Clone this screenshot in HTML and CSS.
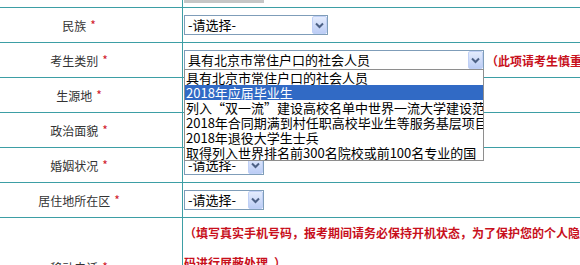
FILE: index.html
```html
<!DOCTYPE html>
<html>
<head>
<meta charset="utf-8">
<link rel="stylesheet" href="styles.css">
</head>
<body>
<div class="form">
  <div class="row row-top">
    <div class="lab"></div>
    <div class="val"><div class="prev-input"></div></div>
  </div>
  <div class="row">
    <div class="lab">民族 <span class="req">*</span></div>
    <div class="val">
      <div class="sel w144"><span class="txt">-请选择-</span><span class="btn"><svg width="15" height="18" viewBox="0 0 15 18"><path d="M4 7.5 L7.5 11 L11 7.5" fill="none" stroke="#4d6185" stroke-width="2"/></svg></span></div>
    </div>
  </div>
  <div class="row">
    <div class="lab">考生类别 <span class="req">*</span></div>
    <div class="val">
      <div class="sel w300"><span class="txt">具有北京市常住户口的社会人员</span><span class="btn"><svg width="15" height="18" viewBox="0 0 15 18"><path d="M4 7.5 L7.5 11 L11 7.5" fill="none" stroke="#4d6185" stroke-width="2"/></svg></span>
        <div class="list">
          <div class="opt">具有北京市常住户口的社会人员</div>
          <div class="opt on">2018年应届毕业生</div>
          <div class="opt">列入“双一流”建设高校名单中世界一流大学建设范围的</div>
          <div class="opt">2018年合同期满到村任职高校毕业生等服务基层项目人员</div>
          <div class="opt">2018年退役大学生士兵</div>
          <div class="opt">取得列入世界排名前300名院校或前100名专业的国</div>
        </div>
      </div>
      <span class="hint">（此项请考生慎重选择，一经确认不得修改）</span>
    </div>
  </div>
  <div class="row">
    <div class="lab">生源地 <span class="req">*</span></div>
    <div class="val">
      <div class="sel w144"><span class="txt">-请选择-</span><span class="btn"><svg width="15" height="18" viewBox="0 0 15 18"><path d="M4 7.5 L7.5 11 L11 7.5" fill="none" stroke="#4d6185" stroke-width="2"/></svg></span></div>
    </div>
  </div>
  <div class="row">
    <div class="lab">政治面貌 <span class="req">*</span></div>
    <div class="val">
      <div class="sel w144"><span class="txt">-请选择-</span><span class="btn"><svg width="15" height="18" viewBox="0 0 15 18"><path d="M4 7.5 L7.5 11 L11 7.5" fill="none" stroke="#4d6185" stroke-width="2"/></svg></span></div>
    </div>
  </div>
  <div class="row">
    <div class="lab">婚姻状况 <span class="req">*</span></div>
    <div class="val">
      <div class="sel w80"><span class="txt">-请选择-</span><span class="btn"><svg width="15" height="18" viewBox="0 0 15 18"><path d="M4 7.5 L7.5 11 L11 7.5" fill="none" stroke="#4d6185" stroke-width="2"/></svg></span></div>
    </div>
  </div>
  <div class="row">
    <div class="lab">居住地所在区 <span class="req">*</span></div>
    <div class="val">
      <div class="sel w80"><span class="txt">-请选择-</span><span class="btn"><svg width="15" height="18" viewBox="0 0 15 18"><path d="M4 7.5 L7.5 11 L11 7.5" fill="none" stroke="#4d6185" stroke-width="2"/></svg></span></div>
    </div>
  </div>
  <div class="row row-tall">
    <div class="lab">移动电话 <span class="req">*</span></div>
    <div class="val val-top">
      <div class="note">（填写真实手机号码，报考期间请务必保持开机状态，为了保护您的个人隐私，系统将对您的手机号<br>码进行屏蔽处理。）</div>
    </div>
  </div>
</div>
</body>
</html>
```

FILE: styles.css
```css
html, body {
  margin: 0;
  padding: 0;
  background: #fff;
  overflow: hidden;
}
body {
  width: 580px;
  height: 265px;
  font-family: "Noto Sans CJK SC", "Liberation Sans", sans-serif;
  color: #333;
}
.form {
  width: 580px;
}
.row {
  display: flex;
  height: 34px;
  border-bottom: 1px solid #3d9ea5;
}
.row-top {
  height: 7px;
}
.row-tall {
  height: 98px;
  border-bottom: none;
}
.lab {
  flex: none;
  width: 183px;
  box-sizing: border-box;
  border-right: 1px solid #3d9ea5;
  padding-right: 24px;
  display: flex;
  align-items: center;
  justify-content: center;
  font-size: 12px;
  white-space: nowrap;
  color: #333;
}
.req {
  color: #d0202a;
  margin-left: 4px;
  font-size: 12px;
  align-self: center;
  position: relative;
  top: -1px;
}
.val {
  flex: 1;
  display: flex;
  align-items: center;
  padding-left: 1px;
  white-space: nowrap;
}
.val-top {
  align-items: flex-start;
}
.prev-input {
  align-self: flex-start;
  width: 80px;
  height: 3px;
  background: #c6c6c6;
}
.sel {
  position: relative;
  flex: none;
  display: flex;
  align-items: center;
  height: 20px;
  box-sizing: border-box;
  border: 1px solid #7f9db9;
  background: #fff;
  color: #000;
}
.w144 { width: 144px; }
.w300 { width: 300px; }
.w80 { width: 80px; }
.txt {
  flex: 1;
  padding-left: 3px;
  font-size: 13px;
  line-height: 18px;
  overflow: hidden;
  white-space: nowrap;
}
.btn {
  flex: none;
  width: 15px;
  height: 18px;
  box-sizing: border-box;
  border: 1px solid #c0d0f6;
  border-radius: 2px;
  background: linear-gradient(to bottom, #e4ecfd, #bccdf5);
  display: flex;
}
.btn svg {
  display: block;
  margin: -1px;
}
.list {
  position: absolute;
  z-index: 10;
  top: 100%;
  left: -1px;
  width: 300px;
  box-sizing: border-box;
  border: 1px solid #8e8e8e;
  background: #fff;
  overflow: hidden;
}
.opt {
  height: 15px;
  line-height: 15px;
  font-size: 13px;
  padding-left: 1px;
  white-space: nowrap;
  overflow: hidden;
  color: #000;
}
.opt.on {
  background: #316ac5;
  color: #fff;
}
.hint {
  margin-left: 2px;
  font-size: 12px;
  font-weight: bold;
  color: #c8101c;
  white-space: nowrap;
}
.note {
  font-size: 12px;
  line-height: 30px;
  font-weight: bold;
  color: #c8101c;
  white-space: nowrap;
}
```
